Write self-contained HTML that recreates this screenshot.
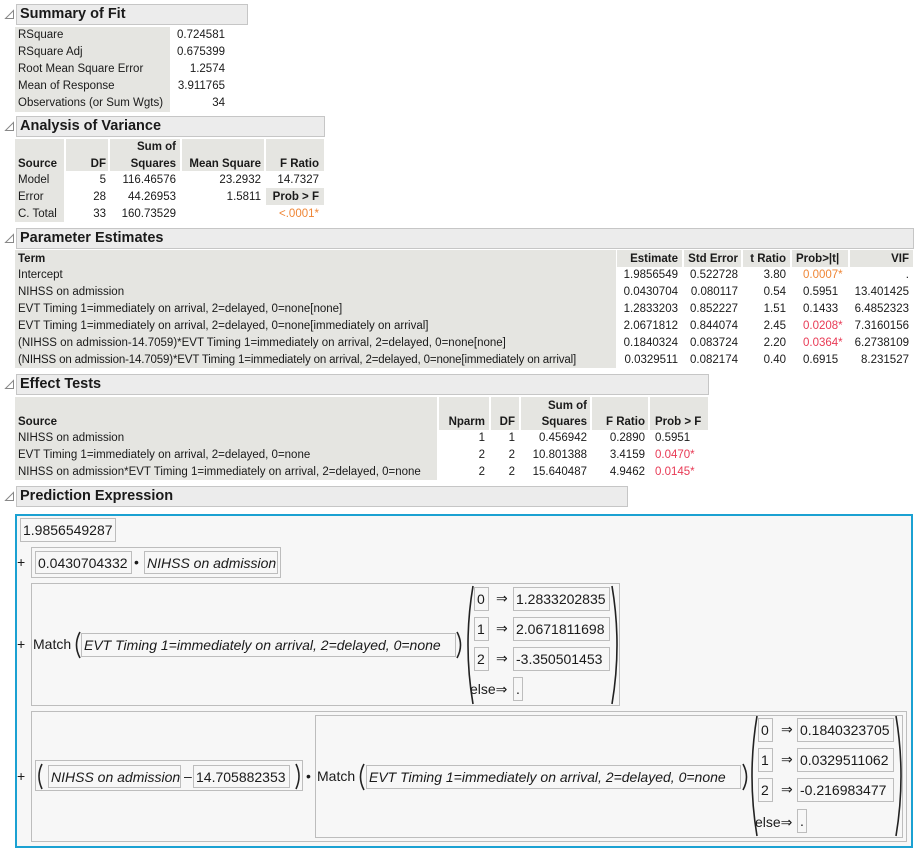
<!DOCTYPE html>
<html><head><meta charset="utf-8"><style>
body{margin:0;width:921px;height:853px;background:#fff;position:relative;overflow:hidden;font-family:"Liberation Sans",Arial,sans-serif;font-size:11.5px;color:#1a1a1a}
div{position:absolute;white-space:nowrap}
.h{background:#ececec;border:1px solid #c6c6c6;font-weight:bold;font-size:14.5px;line-height:19px;padding-left:3px;box-sizing:border-box;height:21px}
.bg{background:#e5e5e1}
.t{line-height:19px;height:17px}
.r{text-align:right}
.b{font-weight:bold}
.or{color:#ef8636}.rd{color:#e83a55}
.bx{border:1px solid #bdbdbd;box-sizing:border-box}
.e{font-size:14px;line-height:22px}
.i{font-style:italic}
</style></head><body>
<svg style="position:absolute;left:0;top:0" width="16" height="853">
<g fill="none" stroke="#888" stroke-width="1">
<path d="M5.5,18.5 L13.5,18.5 L13.5,10.5 Z"/>
<path d="M5.5,130.5 L13.5,130.5 L13.5,122.5 Z"/>
<path d="M5.5,242.5 L13.5,242.5 L13.5,234.5 Z"/>
<path d="M5.5,388.5 L13.5,388.5 L13.5,380.5 Z"/>
<path d="M5.5,500.5 L13.5,500.5 L13.5,492.5 Z"/>
</g></svg>

<div class="h" style="left:16px;top:4px;width:232px">Summary of Fit</div>
<div class="bg" style="left:15px;top:27px;width:155px;height:85px"></div>
<div class="t" style="left:18px;top:26px">RSquare</div>
<div class="t" style="left:18px;top:43px">RSquare Adj</div>
<div class="t" style="left:18px;top:60px">Root Mean Square Error</div>
<div class="t" style="left:18px;top:77px">Mean of Response</div>
<div class="t" style="left:18px;top:94px">Observations (or Sum Wgts)</div>
<div class="t r" style="left:150px;width:75px;top:26px">0.724581</div>
<div class="t r" style="left:150px;width:75px;top:43px">0.675399</div>
<div class="t r" style="left:150px;width:75px;top:60px">1.2574</div>
<div class="t r" style="left:150px;width:75px;top:77px">3.911765</div>
<div class="t r" style="left:150px;width:75px;top:94px">34</div>

<div class="h" style="left:16px;top:116px;width:309px">Analysis of Variance</div>
<div class="bg" style="left:15px;top:139px;width:49px;height:83px"></div>
<div class="bg" style="left:66px;top:139px;width:42px;height:32px"></div>
<div class="bg" style="left:110px;top:139px;width:70px;height:32px"></div>
<div class="bg" style="left:182px;top:139px;width:82px;height:32px"></div>
<div class="bg" style="left:266px;top:139px;width:58px;height:32px"></div>
<div class="bg" style="left:266px;top:188px;width:58px;height:17px"></div>
<div class="t b r" style="left:110px;width:66px;top:138px">Sum of</div>
<div class="t b" style="left:18px;top:155px">Source</div>
<div class="t b r" style="left:60px;width:46px;top:155px">DF</div>
<div class="t b r" style="left:110px;width:66px;top:155px">Squares</div>
<div class="t b r" style="left:182px;width:79px;top:155px">Mean Square</div>
<div class="t b r" style="left:266px;width:53px;top:155px">F Ratio</div>
<div class="t" style="left:18px;top:171px">Model</div>
<div class="t" style="left:18px;top:188px">Error</div>
<div class="t" style="left:18px;top:205px">C. Total</div>
<div class="t r" style="left:60px;width:46px;top:171px">5</div>
<div class="t r" style="left:60px;width:46px;top:188px">28</div>
<div class="t r" style="left:60px;width:46px;top:205px">33</div>
<div class="t r" style="left:100px;width:76px;top:171px">116.46576</div>
<div class="t r" style="left:100px;width:76px;top:188px">44.26953</div>
<div class="t r" style="left:100px;width:76px;top:205px">160.73529</div>
<div class="t r" style="left:182px;width:79px;top:171px">23.2932</div>
<div class="t r" style="left:182px;width:79px;top:188px">1.5811</div>
<div class="t r" style="left:266px;width:53px;top:171px">14.7327</div>
<div class="t r b" style="left:266px;width:53px;top:188px">Prob &gt; F</div>
<div class="t r or" style="left:266px;width:53px;top:205px">&lt;.0001*</div>

<div class="h" style="left:16px;top:228px;width:898px">Parameter Estimates</div>
<div class="bg" style="left:15px;top:250px;width:601px;height:118px"></div>
<div class="bg" style="left:617px;top:250px;width:65px;height:17px"></div>
<div class="bg" style="left:684px;top:250px;width:57px;height:17px"></div>
<div class="bg" style="left:743px;top:250px;width:47px;height:17px"></div>
<div class="bg" style="left:792px;top:250px;width:56px;height:17px"></div>
<div class="bg" style="left:850px;top:250px;width:63px;height:17px"></div>
<div class="t b" style="left:18px;top:250px">Term</div>
<div class="t b r" style="left:610px;width:68px;top:250px">Estimate</div>
<div class="t b r" style="left:680px;width:58px;top:250px">Std Error</div>
<div class="t b r" style="left:740px;width:46px;top:250px">t Ratio</div>
<div class="t b" style="left:796px;top:250px">Prob&gt;|t|</div>
<div class="t b r" style="left:850px;width:59px;top:250px">VIF</div>
<div class="t" style="left:18px;top:266px">Intercept</div>
<div class="t" style="left:18px;top:283px">NIHSS on admission</div>
<div class="t" style="left:18px;top:300px">EVT Timing 1=immediately on arrival, 2=delayed, 0=none[none]</div>
<div class="t" style="left:18px;top:317px">EVT Timing 1=immediately on arrival, 2=delayed, 0=none[immediately on arrival]</div>
<div class="t" style="left:18px;top:334px">(NIHSS on admission-14.7059)*EVT Timing 1=immediately on arrival, 2=delayed, 0=none[none]</div>
<div class="t" style="left:18px;top:351px;letter-spacing:-0.15px">(NIHSS on admission-14.7059)*EVT Timing 1=immediately on arrival, 2=delayed, 0=none[immediately on arrival]</div>
<div class="t r" style="left:610px;width:68px;top:266px">1.9856549</div>
<div class="t r" style="left:610px;width:68px;top:283px">0.0430704</div>
<div class="t r" style="left:610px;width:68px;top:300px">1.2833203</div>
<div class="t r" style="left:610px;width:68px;top:317px">2.0671812</div>
<div class="t r" style="left:610px;width:68px;top:334px">0.1840324</div>
<div class="t r" style="left:610px;width:68px;top:351px">0.0329511</div>
<div class="t r" style="left:680px;width:58px;top:266px">0.522728</div>
<div class="t r" style="left:680px;width:58px;top:283px">0.080117</div>
<div class="t r" style="left:680px;width:58px;top:300px">0.852227</div>
<div class="t r" style="left:680px;width:58px;top:317px">0.844074</div>
<div class="t r" style="left:680px;width:58px;top:334px">0.083724</div>
<div class="t r" style="left:680px;width:58px;top:351px">0.082174</div>
<div class="t r" style="left:740px;width:46px;top:266px">3.80</div>
<div class="t r" style="left:740px;width:46px;top:283px">0.54</div>
<div class="t r" style="left:740px;width:46px;top:300px">1.51</div>
<div class="t r" style="left:740px;width:46px;top:317px">2.45</div>
<div class="t r" style="left:740px;width:46px;top:334px">2.20</div>
<div class="t r" style="left:740px;width:46px;top:351px">0.40</div>
<div class="t or" style="left:803px;top:266px">0.0007*</div>
<div class="t" style="left:803px;top:283px">0.5951</div>
<div class="t" style="left:803px;top:300px">0.1433</div>
<div class="t rd" style="left:803px;top:317px">0.0208*</div>
<div class="t rd" style="left:803px;top:334px">0.0364*</div>
<div class="t" style="left:803px;top:351px">0.6915</div>
<div class="t r" style="left:850px;width:59px;top:266px">.</div>
<div class="t r" style="left:850px;width:59px;top:283px">13.401425</div>
<div class="t r" style="left:850px;width:59px;top:300px">6.4852323</div>
<div class="t r" style="left:850px;width:59px;top:317px">7.3160156</div>
<div class="t r" style="left:850px;width:59px;top:334px">6.2738109</div>
<div class="t r" style="left:850px;width:59px;top:351px">8.231527</div>

<div class="h" style="left:16px;top:374px;width:693px">Effect Tests</div>
<div class="bg" style="left:15px;top:397px;width:422px;height:83px"></div>
<div class="bg" style="left:439px;top:397px;width:50px;height:33px"></div>
<div class="bg" style="left:491px;top:397px;width:28px;height:33px"></div>
<div class="bg" style="left:521px;top:397px;width:69px;height:33px"></div>
<div class="bg" style="left:592px;top:397px;width:56px;height:33px"></div>
<div class="bg" style="left:650px;top:397px;width:58px;height:33px"></div>
<div class="t b r" style="left:521px;width:66px;top:397px">Sum of</div>
<div class="t b" style="left:18px;top:413px">Source</div>
<div class="t b r" style="left:439px;width:46px;top:413px">Nparm</div>
<div class="t b r" style="left:491px;width:24px;top:413px">DF</div>
<div class="t b r" style="left:521px;width:66px;top:413px">Squares</div>
<div class="t b r" style="left:592px;width:53px;top:413px">F Ratio</div>
<div class="t b" style="left:655px;top:413px">Prob &gt; F</div>
<div class="t" style="left:18px;top:429px">NIHSS on admission</div>
<div class="t" style="left:18px;top:446px">EVT Timing 1=immediately on arrival, 2=delayed, 0=none</div>
<div class="t" style="left:18px;top:463px">NIHSS on admission*EVT Timing 1=immediately on arrival, 2=delayed, 0=none</div>
<div class="t r" style="left:439px;width:46px;top:429px">1</div>
<div class="t r" style="left:439px;width:46px;top:446px">2</div>
<div class="t r" style="left:439px;width:46px;top:463px">2</div>
<div class="t r" style="left:491px;width:24px;top:429px">1</div>
<div class="t r" style="left:491px;width:24px;top:446px">2</div>
<div class="t r" style="left:491px;width:24px;top:463px">2</div>
<div class="t r" style="left:510px;width:77px;top:429px">0.456942</div>
<div class="t r" style="left:510px;width:77px;top:446px">10.801388</div>
<div class="t r" style="left:510px;width:77px;top:463px">15.640487</div>
<div class="t r" style="left:592px;width:53px;top:429px">0.2890</div>
<div class="t r" style="left:592px;width:53px;top:446px">3.4159</div>
<div class="t r" style="left:592px;width:53px;top:463px">4.9462</div>
<div class="t" style="left:655px;top:429px">0.5951</div>
<div class="t rd" style="left:655px;top:446px">0.0470*</div>
<div class="t rd" style="left:655px;top:463px">0.0145*</div>

<div class="h" style="left:16px;top:486px;width:612px">Prediction Expression</div>
<div style="left:15px;top:514px;width:898px;height:334px;border:2px solid #1ba1d2;box-sizing:border-box;background:#f7f7f7"></div>

<div class="bx e" style="left:20px;top:518px;width:96px;height:24px;padding-left:2px">1.9856549287</div>

<div class="e" style="left:17px;top:551px">+</div>
<div class="bx" style="left:31px;top:547px;width:250px;height:31px"></div>
<div class="bx e" style="left:35px;top:551px;width:97px;height:23px;padding-left:2px">0.0430704332</div>
<div class="e" style="left:134px;top:551px">•</div>
<div class="bx e i" style="left:144px;top:551px;width:134px;height:23px;padding-left:2px">NIHSS on admission</div>

<div class="e" style="left:17px;top:633px">+</div>
<div class="bx" style="left:31px;top:583px;width:589px;height:123px"></div>
<div class="e" style="left:33px;top:633px">Match</div>
<div class="bx e i" style="left:81px;top:633px;width:375px;height:24px;padding-left:2px">EVT Timing 1=immediately on arrival, 2=delayed, 0=none</div>
<div class="bx e" style="left:474px;top:587px;width:15px;height:24px;padding-left:2px">0</div>
<div class="bx e" style="left:474px;top:617px;width:15px;height:24px;padding-left:2px">1</div>
<div class="bx e" style="left:474px;top:647px;width:15px;height:24px;padding-left:2px">2</div>
<div class="e" style="left:496px;top:587px">⇒</div>
<div class="e" style="left:496px;top:617px">⇒</div>
<div class="e" style="left:496px;top:647px">⇒</div>
<div class="e" style="left:470px;top:678px">else⇒</div>
<div class="bx e" style="left:513px;top:587px;width:97px;height:24px;padding-left:2px">1.2833202835</div>
<div class="bx e" style="left:513px;top:617px;width:97px;height:24px;padding-left:2px">2.0671811698</div>
<div class="bx e" style="left:513px;top:647px;width:97px;height:24px;padding-left:2px">-3.350501453</div>
<div class="bx e" style="left:513px;top:677px;width:10px;height:24px;padding-left:2px">.</div>

<div class="e" style="left:17px;top:765px">+</div>
<div class="bx" style="left:31px;top:711px;width:876px;height:131px"></div>
<div class="bx" style="left:35px;top:760px;width:268px;height:31px"></div>
<div class="bx e i" style="left:48px;top:765px;width:133px;height:23px;padding-left:2px">NIHSS on admission</div>
<div class="e" style="left:184px;top:765px">–</div>
<div class="bx e" style="left:193px;top:765px;width:97px;height:23px;padding-left:2px">14.705882353</div>
<div class="e" style="left:306px;top:765px">•</div>
<div class="bx" style="left:315px;top:715px;width:588px;height:123px"></div>
<div class="e" style="left:317px;top:765px">Match</div>
<div class="bx e i" style="left:366px;top:765px;width:375px;height:24px;padding-left:2px">EVT Timing 1=immediately on arrival, 2=delayed, 0=none</div>
<div class="bx e" style="left:758px;top:718px;width:15px;height:24px;padding-left:2px">0</div>
<div class="bx e" style="left:758px;top:748px;width:15px;height:24px;padding-left:2px">1</div>
<div class="bx e" style="left:758px;top:778px;width:15px;height:24px;padding-left:2px">2</div>
<div class="e" style="left:781px;top:718px">⇒</div>
<div class="e" style="left:781px;top:748px">⇒</div>
<div class="e" style="left:781px;top:778px">⇒</div>
<div class="e" style="left:755px;top:811px">else⇒</div>
<div class="bx e" style="left:797px;top:718px;width:97px;height:24px;padding-left:2px">0.1840323705</div>
<div class="bx e" style="left:797px;top:748px;width:97px;height:24px;padding-left:2px">0.0329511062</div>
<div class="bx e" style="left:797px;top:778px;width:97px;height:24px;padding-left:2px">-0.216983477</div>
<div class="bx e" style="left:797px;top:809px;width:10px;height:24px;padding-left:2px">.</div>

<svg style="position:absolute;left:0;top:0" width="921" height="853">
<g fill="none" stroke="#222" stroke-width="1.6">
<path d="M80,632 Q73,645 80,658"/>
<path d="M457,632 Q464,645 457,658"/>
<path d="M473,586 Q463,645 473,704"/>
<path d="M612,586 Q622,645 612,704"/>
<path d="M42,764 Q36,776 42,789"/>
<path d="M296,764 Q302,776 296,789"/>
<path d="M364,764 Q357,777 364,790"/>
<path d="M743,764 Q750,777 743,790"/>
<path d="M757,716 Q747,776 757,836"/>
<path d="M896,716 Q906,776 896,836"/>
</g></svg>
</body></html>
